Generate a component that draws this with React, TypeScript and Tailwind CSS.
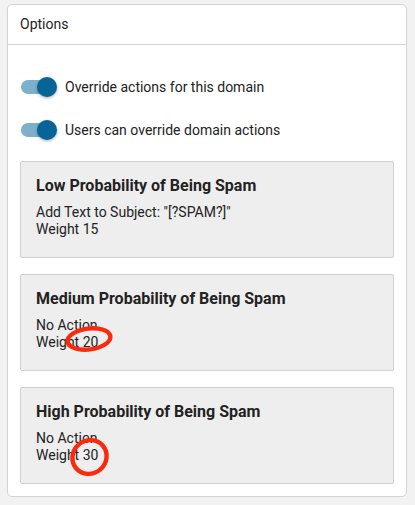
import React from 'react';

const rules = [
  {
    title: 'Low Probability of Being Spam',
    action: 'Add Text to Subject: "[?SPAM?]"',
    weight: 15,
    mark: null as null | 'wide' | 'round',
  },
  { title: 'Medium Probability of Being Spam', action: 'No Action', weight: 20, mark: 'wide' as const },
  { title: 'High Probability of Being Spam', action: 'No Action', weight: 30, mark: 'round' as const },
];

function Toggle() {
  return (
    <span className="relative inline-block h-[20px] w-[36px] shrink-0">
      <span className="absolute left-0 top-[3px] h-[14px] w-[34px] rounded-full bg-[#7db0cb]" />
      <span className="absolute right-0 top-0 h-[20px] w-[20px] rounded-full bg-[#066497] shadow-[0_1px_3px_rgba(0,0,0,0.35)]" />
    </span>
  );
}

function Mark({ kind }: { kind: 'wide' | 'round' }) {
  if (kind === 'wide') {
    return (
      <svg className="pointer-events-none absolute left-[43px] top-[50px]" width="52" height="30" viewBox="0 0 52 30">
        <ellipse cx="25" cy="14" rx="21.5" ry="10.5" fill="none" stroke="#fa2a0c" strokeWidth="4.4" transform="rotate(-7 25 14)" />
      </svg>
    );
  }
  return (
    <svg className="pointer-events-none absolute left-[48px] top-[48px]" width="42" height="44" viewBox="0 0 42 44">
      <ellipse cx="20.5" cy="21" rx="17.5" ry="16.5" fill="none" stroke="#fa2a0c" strokeWidth="4.4" transform="rotate(-40 20.5 21)" />
    </svg>
  );
}

export default function App() {
  return (
    <div className="min-h-[505px] bg-[#f2f2f2] pt-[4px] pl-[7px]" style={{ fontFamily: 'Roboto, "Liberation Sans", sans-serif' }}>
      <div className="w-[400px] rounded-[5px] border border-[#d3d3d3] bg-white text-[#222]">
        <div className="flex h-[40px] items-center border-b border-[#d3d3d3] px-3 text-[14px]">Options</div>
        <div className="px-3 pb-[12px]">
          <div className="flex flex-col gap-[23px] pl-[1px] pt-[32px]">
            <label className="flex h-[20px] items-center gap-[8px] text-[14px]">
              <Toggle />
              Override actions for this domain
            </label>
            <label className="flex h-[20px] items-center gap-[8px] text-[14px]">
              <Toggle />
              Users can override domain actions
            </label>
          </div>
          <div className="mt-[21px] flex flex-col gap-[16px]">
            {rules.map((r) => (
              <div key={r.title} className="relative h-[97px] rounded-[2px] border border-[#d0d0d0] bg-[#eeeeee] px-[15px] pt-[14px]">
                <div className="text-[16px] font-bold leading-[20px]">{r.title}</div>
                <div className="mt-[8px] text-[14px] leading-[17px]">
                  <div>{r.action}</div>
                  <div>Weight {r.weight}</div>
                </div>
                {r.mark && <Mark kind={r.mark} />}
              </div>
            ))}
          </div>
        </div>
      </div>
    </div>
  );
}
